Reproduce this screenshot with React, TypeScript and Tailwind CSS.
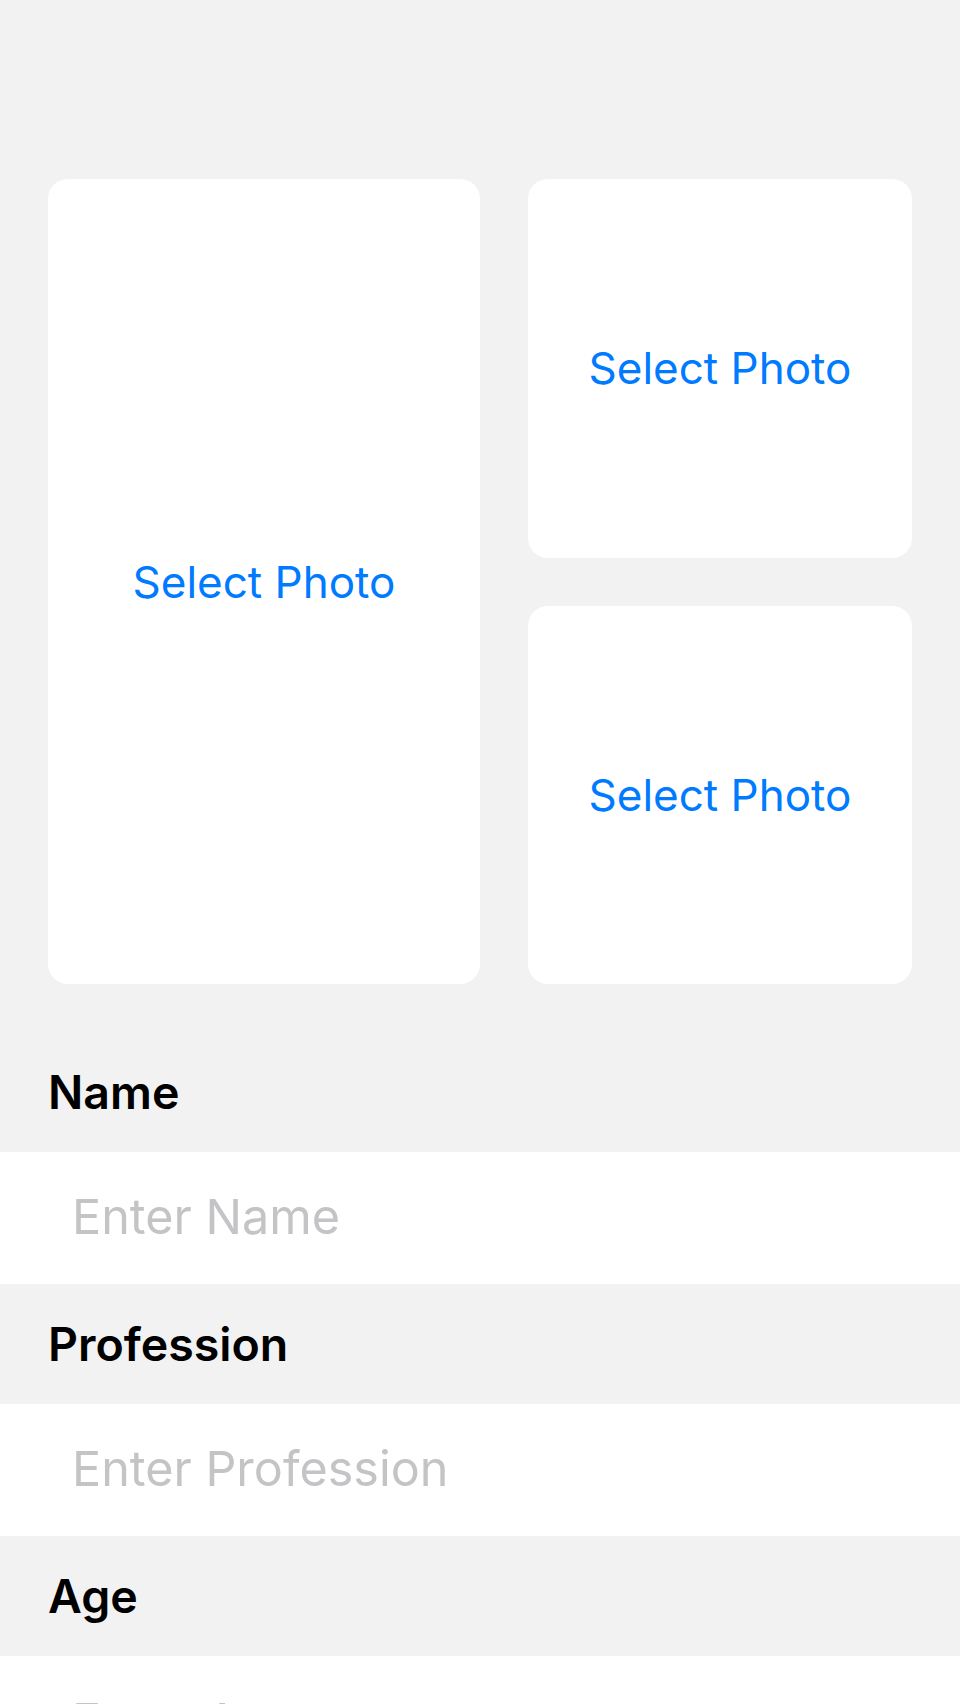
import React from "react";

function PhotoCard({ className }: { className: string }) {
  return (
    <div className={`bg-white rounded-[20px] flex items-center justify-center ${className}`}>
      <span className="text-[#007aff] text-[44px] leading-none">Select Photo</span>
    </div>
  );
}

function Field({ label, placeholder }: { label: string; placeholder: string }) {
  return (
    <div className="flex flex-col">
      <div className="h-[120px] flex items-center px-[48px]">
        <span className="text-black font-semibold text-[46.5px] leading-none">{label}</span>
      </div>
      <div className="h-[132px] bg-white flex items-center px-[72px] pb-[3px]">
        <input
          placeholder={placeholder}
          className="w-full bg-transparent outline-none text-[48.5px] leading-none text-black placeholder:text-[#c4c4c7]"
        />
      </div>
    </div>
  );
}

export default function App() {
  return (
    <div
      className="min-h-[1704px] bg-[#f2f2f2] pt-[179px]"
      style={{ fontFamily: "Inter, 'Noto Sans', sans-serif" }}
    >
      <div className="flex gap-[48px] px-[48px] h-[805px]">
        <PhotoCard className="w-[432px] h-full" />
        <div className="flex-1 flex flex-col gap-[48px]">
          <PhotoCard className="flex-1" />
          <PhotoCard className="flex-1" />
        </div>
      </div>
      <div className="mt-[48px]">
        <Field label="Name" placeholder="Enter Name" />
        <Field label="Profession" placeholder="Enter Profession" />
        <Field label="Age" placeholder="Enter Age" />
      </div>
    </div>
  );
}
